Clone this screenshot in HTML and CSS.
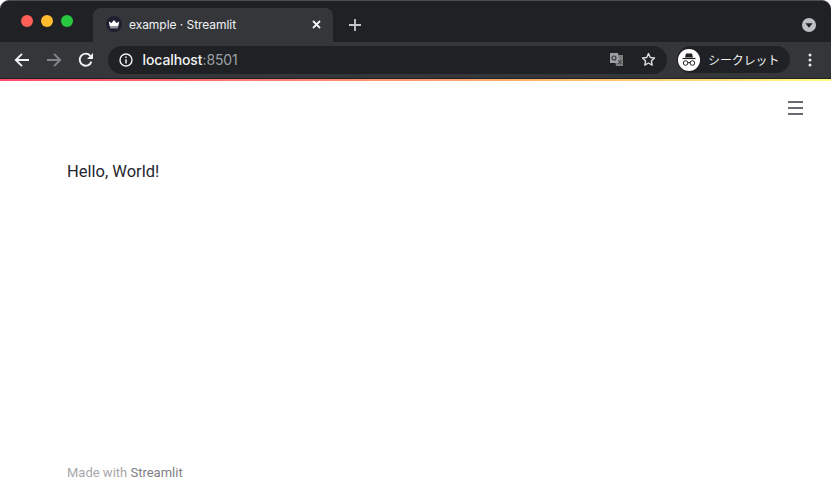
FILE: index.html
```html
<!DOCTYPE html>
<html lang="ja">
<head>
<meta charset="utf-8">
<title>example · Streamlit</title>
<link rel="stylesheet" href="styles.css">
</head>
<body>
<div class="window">
  <header class="tabstrip">
    <div class="lights">
      <span class="light red"></span>
      <span class="light yellow"></span>
      <span class="light green"></span>
    </div>
    <div class="tab">
      <span class="favicon">
        <svg width="16" height="16" viewBox="0 0 16 16"><path fill="#fff" d="M2.800 5.400l2.700 1.700L8 4l2.500 3.100 2.700-1.700-1 5.200H3.800z"/><path fill="#fff" opacity=".75" d="M4 11.300h8v1H4z"/></svg>
      </span>
      <span class="tab-title">example · Streamlit</span>
      <svg class="tab-close" width="9" height="9" viewBox="0 0 9 9"><path d="M1 1l7 7M8 1L1 8" stroke="#f1f3f4" stroke-width="1.800" fill="none"/></svg>
    </div>
    <svg class="new-tab" width="12" height="12" viewBox="0 0 12 12"><path d="M6 0v12M0 6h12" stroke="#c4c7cb" stroke-width="1.800" fill="none"/></svg>
    <span class="strip-spacer"></span>
    <span class="tab-search">
      <svg width="14" height="14" viewBox="0 0 14 14"><circle cx="7" cy="7" r="7" fill="#bdc1c6"/><path d="M3.400 5.200h7.200L7 9.800z" fill="#202124"/></svg>
    </span>
  </header>
  <nav class="toolbar">
    <svg class="nav-icon" width="16" height="16" viewBox="0 0 16 16"><path d="M15 8H2M8 1.800L1.800 8 8 14.200" stroke="#f1f3f4" stroke-width="1.900" fill="none"/></svg>
    <svg class="nav-icon" width="16" height="16" viewBox="0 0 16 16"><path d="M1 8h13M8 1.800L14.200 8 8 14.200" stroke="#80868b" stroke-width="1.900" fill="none"/></svg>
    <svg class="nav-icon" width="16" height="16" viewBox="0 0 16 16"><path d="M13.400 9.600A6 6 0 1 1 12.300 3.800" stroke="#f1f3f4" stroke-width="1.900" fill="none"/><path d="M15 1v6H9z" fill="#f1f3f4"/></svg>
    <div class="omnibox">
      <svg class="info" width="14" height="14" viewBox="0 0 14 14"><circle cx="7" cy="7" r="6" stroke="#f1f3f4" stroke-width="1.400" fill="none"/><path d="M7 6.200v4.200M7 3.400v1.600" stroke="#f1f3f4" stroke-width="1.500" fill="none"/></svg>
      <span class="url"><span class="host">localhost</span>:8501</span>
      <svg class="translate" width="15" height="15" viewBox="0 0 15 15"><path d="M5 3h9v11H7z" fill="#e8eaed" opacity=".45"/><path d="M1 1h8l2 10H1z" fill="#9aa0a6"/><circle cx="5" cy="6" r="2" fill="none" stroke="#35363a" stroke-width="1.200"/><path d="M9 8l3.400 4M12.400 8L9 12" stroke="#35363a" stroke-width="1"/></svg>
      <svg class="star" width="15" height="15" viewBox="0 0 15 15"><path d="M7.500 1.600l1.800 3.900 4.200.5-3.100 2.900.8 4.200-3.700-2.100-3.700 2.100.8-4.200L1.500 6l4.200-.5z" stroke="#dadce0" stroke-width="1.400" fill="none" stroke-linejoin="round"/></svg>
    </div>
    <div class="profile">
      <span class="avatar">
        <svg width="22" height="22" viewBox="0 0 22 22"><path d="M8 4.500h6l1 4H7z" fill="#202124"/><path d="M4.500 9.500h13" stroke="#202124" stroke-width="1.200"/><circle cx="7.600" cy="14" r="2.300" fill="none" stroke="#202124" stroke-width="1"/><circle cx="14.400" cy="14" r="2.300" fill="none" stroke="#202124" stroke-width="1"/><path d="M10 13.600h2" stroke="#202124" stroke-width="1"/></svg>
      </span>
      <span class="profile-name">シークレット</span>
    </div>
    <svg class="menu-dots" width="4" height="14" viewBox="0 0 4 14"><circle cx="2" cy="2" r="1.500" fill="#e8eaed"/><circle cx="2" cy="7" r="1.500" fill="#e8eaed"/><circle cx="2" cy="12" r="1.500" fill="#e8eaed"/></svg>
  </nav>
  <div class="rainbow"></div>
  <main class="page">
    <div class="page-top">
      <svg class="hamburger" width="15" height="14" viewBox="0 0 15 14"><path d="M0 1h15M0 7h15M0 13h15" stroke="#3a3b44" stroke-width="1.600" fill="none"/></svg>
    </div>
    <p class="hello">Hello, World!</p>
    <footer class="made">Made with <span class="brand">Streamlit</span></footer>
  </main>
</div>
</body>
</html>
```
FILE: styles.css
```css
* { box-sizing: border-box; }
html, body { margin: 0; height: 100%; background: #fff; }
body { overflow: hidden; }
.window {
  width: 831px;
  height: 491px;
  display: flex;
  flex-direction: column;
  font-family: "Liberation Sans", sans-serif;
}
.tabstrip {
  height: 42px;
  flex: none;
  display: flex;
  align-items: flex-start;
  background: #202124;
  border-top: 1px solid #4d4e51;
  border-radius: 9px 9px 0 0;
  padding-left: 21px;
}
.lights { display: flex; gap: 8px; padding-top: 14px; width: 72px; }
.light { width: 12px; height: 12px; border-radius: 50%; }
.red { background: #ff5f57; }
.yellow { background: #febc2e; }
.green { background: #28c840; }
.tab {
  width: 240px;
  height: 34px;
  margin-top: 7px;
  background: #35363a;
  border-radius: 8px 8px 0 0;
  display: flex;
  align-items: center;
  padding: 0 12px 2px 13px;
  color: #f1f3f4;
  font-family: "Inter", sans-serif;
  font-size: 12px;
  letter-spacing: -0.05px;
}
.favicon {
  width: 16px;
  height: 16px;
  border-radius: 50%;
  background: #1e2030;
  margin-right: 7px;
  display: flex;
}
.tab-title { flex: 1; }
.tab-close { flex: none; }
.new-tab { margin: 18px 0 0 16px; flex: none; }
.strip-spacer { flex: 1; }
.tab-search { margin: 17px 15px 0 0; display: flex; }
.toolbar {
  height: 37px;
  flex: none;
  display: flex;
  align-items: center;
  background: #35363a;
  border-bottom: 1px solid #202124;
  padding: 0 0 1px 14px;
}
.nav-icon { flex: none; margin-right: 16px; }
.toolbar .nav-icon:nth-child(3) { margin-right: 14px; }
.omnibox {
  width: 559px;
  height: 28px;
  background: #202124;
  border-radius: 14px;
  display: flex;
  align-items: center;
  padding: 0 11px;
  flex: none;
}
.info { flex: none; margin-right: 10px; }
.url { flex: 1; font-size: 14px; color: #9aa0a6; font-family: "Inter", sans-serif; letter-spacing: -0.1px; margin-left: -0.5px; }
.host { color: #f1f3f4; font-weight: 500; }
.translate { flex: none; margin-right: 17px; }
.star { flex: none; }
.profile {
  width: 113px;
  height: 27px;
  margin-left: 10px;
  background: #202124;
  border-radius: 14px;
  display: flex;
  align-items: center;
  padding-left: 1px;
  flex: none;
}
.avatar {
  width: 22px;
  height: 22px;
  border-radius: 50%;
  background: #fff;
  margin-right: 8px;
  display: flex;
}
.profile-name {
  font-family: "Noto Sans CJK JP", sans-serif;
  font-size: 12px;
  letter-spacing: -0.1px;
  color: #f1f3f4;
  white-space: nowrap;
}
.menu-dots { flex: none; margin-left: 18px; }
.rainbow {
  height: 2px;
  flex: none;
  background: linear-gradient(90deg, #ff4b6e, #ff8a70 40%, #ffbd6e 70%, #fffd80);
}
.page {
  flex: 1;
  background: #fff;
  display: flex;
  flex-direction: column;
  padding: 0 28px 0 67px;
  font-family: "Roboto", sans-serif;
}
.page-top { display: flex; justify-content: flex-end; padding-top: 20px; }
.hamburger { flex: none; }
.hello {
  margin: 46px 0 0;
  font-size: 16.500px;
  line-height: 22px;
  color: #262730;
}
.made {
  margin-top: auto;
  padding-bottom: 9px;
  font-size: 13px;
  line-height: 18px;
  color: #a6a7ab;
}
.brand { color: #7d7e84; }
```
